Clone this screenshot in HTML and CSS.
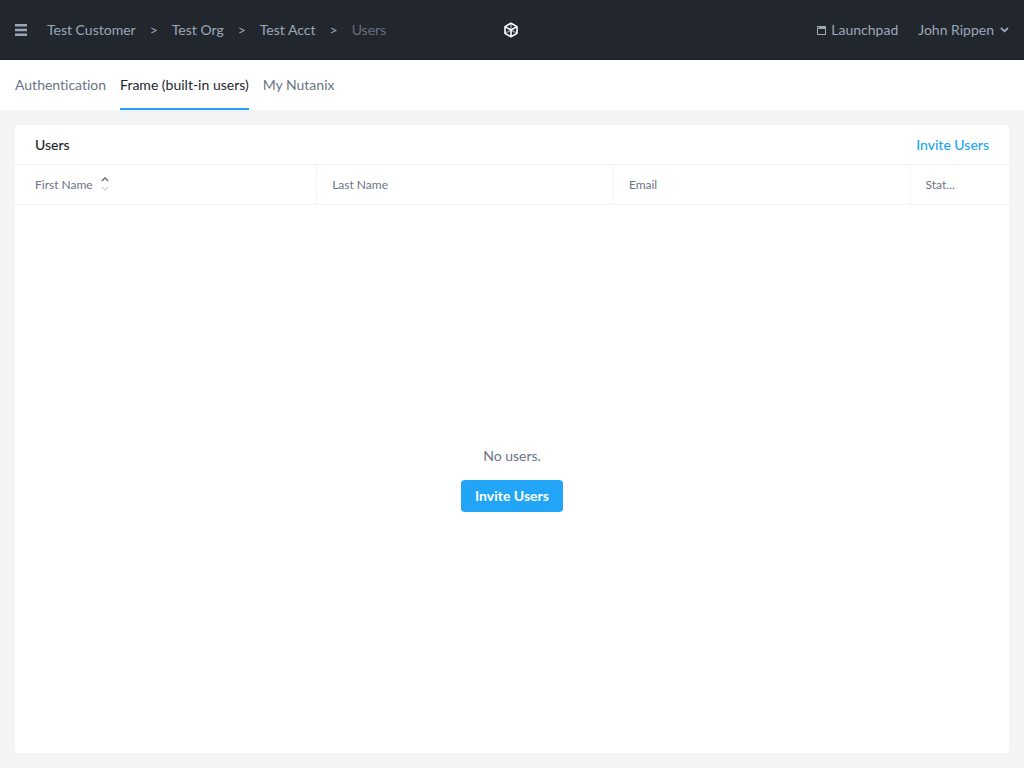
FILE: index.html
```html
<!DOCTYPE html>
<html lang="en">
<head>
<meta charset="utf-8">
<meta name="viewport" content="width=device-width, initial-scale=1">
<title>Users</title>
<link rel="stylesheet" href="styles.css">
</head>
<body>
<header class="topbar">
  <div class="topbar-left">
    <button class="menu-button" type="button" aria-label="Menu">
      <svg width="12" height="12" viewBox="0 0 12 12" fill="currentColor"><path d="M0 0h12v2.500H0zM0 4.750h12v2.500H0zM0 9.500h12V12H0z"/></svg>
    </button>
    <nav class="breadcrumb" aria-label="Breadcrumb">
      <a href="#">Test Customer</a>
      <span class="separator">&gt;</span>
      <a href="#">Test Org</a>
      <span class="separator">&gt;</span>
      <a href="#">Test Acct</a>
      <span class="separator">&gt;</span>
      <span class="current">Users</span>
    </nav>
  </div>
  <a class="logo" href="#" aria-label="Home">
    <svg width="18" height="16" viewBox="0 0 18 16" fill="none" stroke-linejoin="round"><path d="M8 1.500V8M2.500 11 8 8l5.500 3" stroke="#8795a8" stroke-width="1.600"/><path d="M8 1.200 14 4.600v6.800L8 14.800 2 11.400V4.600zM2 4.600 8 8l6-3.400M8 8v6.800" stroke="#fff" stroke-width="1.600"/></svg>
  </a>
  <div class="topbar-right">
    <a class="launchpad" href="#">
      <svg width="9" height="9" viewBox="0 0 9 9" fill="currentColor" fill-rule="evenodd"><path d="M0 0h9v9H0zM1 3v5h7V3zM1 1v1h1V1z"/></svg>
      Launchpad
    </a>
    <button class="account" type="button">
      John Rippen
      <svg width="9" height="6" viewBox="0 0 9 6" fill="none" stroke="currentColor" stroke-width="1.800"><path d="m1 1 3.500 3.300L8 1"/></svg>
    </button>
  </div>
</header>
<nav class="tabs">
  <a href="#">Authentication</a>
  <a class="active" href="#" aria-current="page">Frame (built-in users)</a>
  <a href="#">My Nutanix</a>
</nav>
<main class="content">
  <section class="card">
    <div class="card-header">
      <h1>Users</h1>
      <button class="link-button" type="button">Invite Users</button>
    </div>
    <table class="users">
      <colgroup><col class="col-first"><col class="col-name"><col class="col-name"><col class="col-status"></colgroup>
      <thead>
        <tr>
          <th scope="col" aria-sort="ascending"><span class="sortable">First Name
            <svg width="8" height="16" viewBox="0 0 8 16" fill="none" stroke-width="1.600"><path d="M.7 4 4 1l3.300 3" stroke="#627386"/><path d="M.7 10 4 13l3.300-3" stroke="#d2d8df"/></svg></span></th>
          <th scope="col">Last Name</th>
          <th scope="col">Email</th>
          <th scope="col">Stat...</th>
        </tr>
      </thead>
    </table>
    <div class="empty">
      <p>No users.</p>
      <button class="primary-button" type="button">Invite Users</button>
    </div>
  </section>
</main>
</body>
</html>
```
FILE: styles.css
```css
* {
  box-sizing: border-box;
}

body {
  margin: 0;
  min-height: 100vh;
  display: flex;
  flex-direction: column;
  background: #f2f4f6;
  color: #22272e;
  font: 14px/20px Lato, "Liberation Sans", sans-serif;
  font-variant-ligatures: none;
}

a {
  color: inherit;
  text-decoration: none;
}

button {
  padding: 0;
  border: 0;
  background: none;
  color: inherit;
  font: inherit;
  cursor: pointer;
}

svg {
  display: block;
  flex: none;
}

.topbar {
  display: grid;
  grid-template-columns: 1fr auto 1fr;
  align-items: center;
  min-height: 60px;
  padding: 0 15px;
  background: #22272e;
  border-bottom: 2px solid #20232b;
  border-top: 2px solid #22272e;
  color: #9aa8b8;
}

.topbar-left,
.topbar-right,
.breadcrumb,
.launchpad,
.account,
.sortable {
  display: flex;
  align-items: center;
}

.topbar-left {
  gap: 20px;
}

.breadcrumb {
  gap: 14px;
}

.breadcrumb .current {
  color: #686f80;
}

.topbar-right {
  justify-content: flex-end;
  gap: 20px;
}

.launchpad {
  gap: 5px;
}

.account {
  gap: 6px;
}

.tabs {
  display: flex;
  gap: 14px;
  padding: 0 15px;
  background: #fff;
  color: #6b7585;
}

.tabs a {
  padding: 15px 0 13px;
  border-bottom: 2px solid transparent;
}

.tabs .active {
  border-color: #22a5f7;
  color: #22272e;
}

.content {
  flex: 1;
  display: flex;
  padding: 15px;
}

.card {
  flex: 1;
  display: flex;
  flex-direction: column;
  background: #fff;
  border-radius: 4px;
}

.card-header {
  display: flex;
  align-items: center;
  justify-content: space-between;
  padding: 10px 20px 9px;
  border-bottom: 1px solid #f2f4f6;
}

.card-header h1 {
  margin: 0;
  font-size: 14px;
  font-weight: 500;
}

.link-button {
  color: #22a5f7;
  font-weight: 500;
}

.users {
  width: 100%;
  table-layout: fixed;
  border-collapse: separate;
  border-spacing: 0;
}

.col-first {
  width: 30.400%;
}

.col-name {
  width: 29.850%;
}

.users th {
  height: 40px;
  padding: 0 15px;
  border-bottom: 1px solid #f2f4f6;
  border-right: 1px solid #f2f4f6;
  color: #6b7585;
  font-size: 12px;
  font-weight: 400;
  text-align: left;
}

.users th:first-child {
  padding-left: 20px;
}

.users th:last-child {
  border-right: 0;
}

.sortable {
  gap: 8px;
}

.empty {
  flex: 1;
  display: flex;
  flex-direction: column;
  align-items: center;
  justify-content: center;
  gap: 14px;
  color: #6b7585;
}

.empty p {
  margin: 0;
}

.primary-button {
  padding: 6px 14px;
  border-radius: 4px;
  background: #22a5f7;
  color: #fff;
  font-weight: 700;
}
```
